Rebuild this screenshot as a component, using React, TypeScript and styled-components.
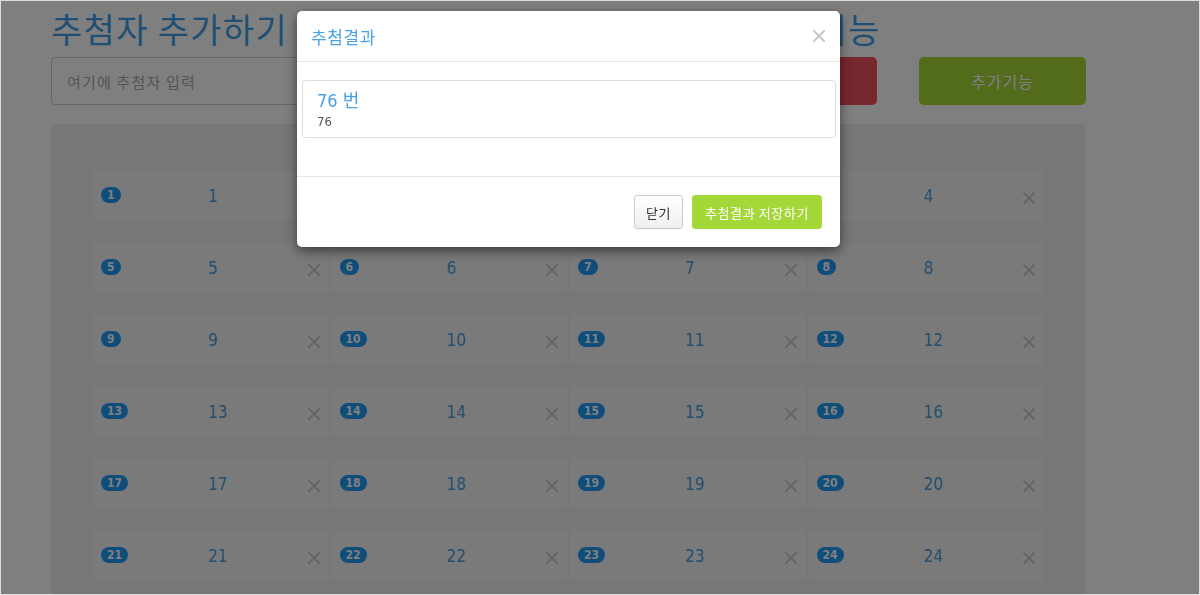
import * as React from "react";
import styled, { createGlobalStyle } from "styled-components";

const GlobalStyle = createGlobalStyle`
  html, body {
    margin: 0;
    padding: 0;
    background: #fff;
    overflow: hidden;
  }
  body {
    font-family: "DejaVu Sans Condensed", "DejaVu Sans", "Noto Sans CJK KR", sans-serif;
    font-stretch: condensed;
    color: #333;
  }
  * {
    box-sizing: border-box;
  }
`;

const blue = "#45a3e6";
const lime = "#a4d839";

const Page = styled.div`
  padding: 9px 114px 0 51px;
`;

const Title = styled.h1`
  margin: 0;
  font-family: "Noto Sans CJK KR", sans-serif;
  font-size: 34px;
  font-weight: 400;
  letter-spacing: 1.3px;
  line-height: 40px;
  color: #3fa0e8;
  white-space: nowrap;
`;

const InputRow = styled.div`
  display: flex;
  gap: 42px;
  margin-top: 8px;
  height: 48px;
`;

const NameInput = styled.input`
  flex: 1;
  height: 48px;
  border: 1px solid #ccc;
  border-radius: 4px;
  padding: 0 15px;
  font-family: "Noto Sans CJK KR", sans-serif;
  font-size: 15px;
  letter-spacing: 1.2px;
  background: #fff;

  &::placeholder {
    color: #aaa;
  }
`;

const BigButton = styled.button<{ $color: string }>`
  width: 167px;
  height: 48px;
  border: none;
  border-radius: 5px;
  background: ${(p) => p.$color};
  color: #fff;
  font-family: "Noto Sans CJK KR", sans-serif;
  font-size: 16px;
  letter-spacing: 1px;
`;

const Board = styled.div`
  margin-top: 19px;
  background: #eee;
  border-radius: 5px;
  padding: 46px 42px 40px;
  display: grid;
  grid-template-columns: repeat(4, 1fr);
  gap: 21px 3px;
`;

const Card = styled.div`
  height: 51px;
  background: #f5f5f5;
  border-radius: 3px;
  display: grid;
  grid-template-columns: 107px 1fr auto;
  align-items: center;
  padding: 0 9px 0 8px;
`;

const Badge = styled.span`
  justify-self: start;
  margin-top: -2px;
  background: #1e9bf5;
  color: #fff;
  font-size: 12px;
  font-weight: 700;
  line-height: 14px;
  padding: 1px 6px;
  border-radius: 8px;
`;

const Num = styled.span`
  font-size: 17px;
  color: #4aa0e0;
`;

const Remove = styled.span`
  display: flex;
  padding-top: 5px;
`;

const Overlay = styled.div`
  position: fixed;
  inset: 0;
  background: rgba(0, 0, 0, 0.5);
  z-index: 1040;
`;

const Modal = styled.div`
  position: fixed;
  left: 297px;
  top: 11px;
  width: 543px;
  background: #fff;
  border-radius: 5px;
  box-shadow: 0 4px 12px rgba(0, 0, 0, 0.5);
  z-index: 1050;
`;

const ModalHeader = styled.div`
  height: 51px;
  display: flex;
  align-items: center;
  justify-content: space-between;
  padding: 0 15px 0 14px;
  border-bottom: 1px solid #e5e5e5;
`;

const ModalTitle = styled.h4`
  margin: 0;
  font-family: "Noto Sans CJK KR", sans-serif;
  font-size: 17px;
  font-weight: 400;
  letter-spacing: 0.6px;
  color: ${blue};
`;

const ModalBody = styled.div`
  padding: 18px 4px 18px 5px;
`;

const ResultItem = styled.div`
  border: 1px solid #ddd;
  border-radius: 4px;
  padding: 10px 14px 6px;
  margin-bottom: 20px;
`;

const ResultHeading = styled.div`
  font-size: 18px;
  line-height: 20px;
  color: ${blue};
  margin-bottom: 2px;
`;

const ResultText = styled.div`
  font-size: 13px;
  line-height: 18px;
  color: #555;
`;

const ModalFooter = styled.div`
  border-top: 1px solid #e5e5e5;
  padding: 18px 18px;
  display: flex;
  justify-content: flex-end;
  gap: 9px;
`;

const FooterButton = styled.button<{ $primary?: boolean }>`
  height: 34px;
  padding: 0 ${(p) => (p.$primary ? "12px" : "11px")};
  border-radius: 3px;
  border: 1px solid ${(p) => (p.$primary ? lime : "#ccc")};
  background: ${(p) => (p.$primary ? lime : "linear-gradient(#fff, #efefef)")};
  color: ${(p) => (p.$primary ? "#fff" : "#333")};
  font-family: "Noto Sans CJK KR", sans-serif;
  font-size: 13px;
  letter-spacing: 0.6px;
`;

const Frame = styled.div`
  position: fixed;
  inset: 0;
  border: 1px solid #dcdcdc;
  pointer-events: none;
  z-index: 2000;
`;

const Cross = ({ color, size = 12 }: { color: string; size?: number }) => (
  <svg width={size} height={size} viewBox="0 0 12 12">
    <path d="M1 1L11 11M11 1L1 11" stroke={color} strokeWidth="1.9" strokeLinecap="square" />
  </svg>
);

const entries = Array.from({ length: 80 }, (_, i) => i + 1);

const App = () => {
  return (
    <>
      <GlobalStyle />
      <Page>
        <Title>추첨자 추가하기{"\u00a0\u00a0"}랜덤 번호 추첨 및 결과 저장용 추가기능</Title>
        <InputRow>
          <NameInput placeholder="여기에 추첨자 입력" />
          <BigButton $color="#ee4f5c">전체삭제</BigButton>
          <BigButton $color={lime}>추가기능</BigButton>
        </InputRow>
        <Board>
          {entries.map((n) => (
            <Card key={n}>
              <Badge>{n}</Badge>
              <Num>{n}</Num>
              <Remove>
                <Cross color="#c8c8c8" />
              </Remove>
            </Card>
          ))}
        </Board>
      </Page>
      <Overlay />
      <Modal>
        <ModalHeader>
          <ModalTitle>추첨결과</ModalTitle>
          <Cross color="#c4c4c4" />
        </ModalHeader>
        <ModalBody>
          <ResultItem>
            <ResultHeading>76 번</ResultHeading>
            <ResultText>76</ResultText>
          </ResultItem>
        </ModalBody>
        <ModalFooter>
          <FooterButton>닫기</FooterButton>
          <FooterButton $primary>추첨결과 저장하기</FooterButton>
        </ModalFooter>
      </Modal>
      <Frame />
    </>
  );
};

export default App;
